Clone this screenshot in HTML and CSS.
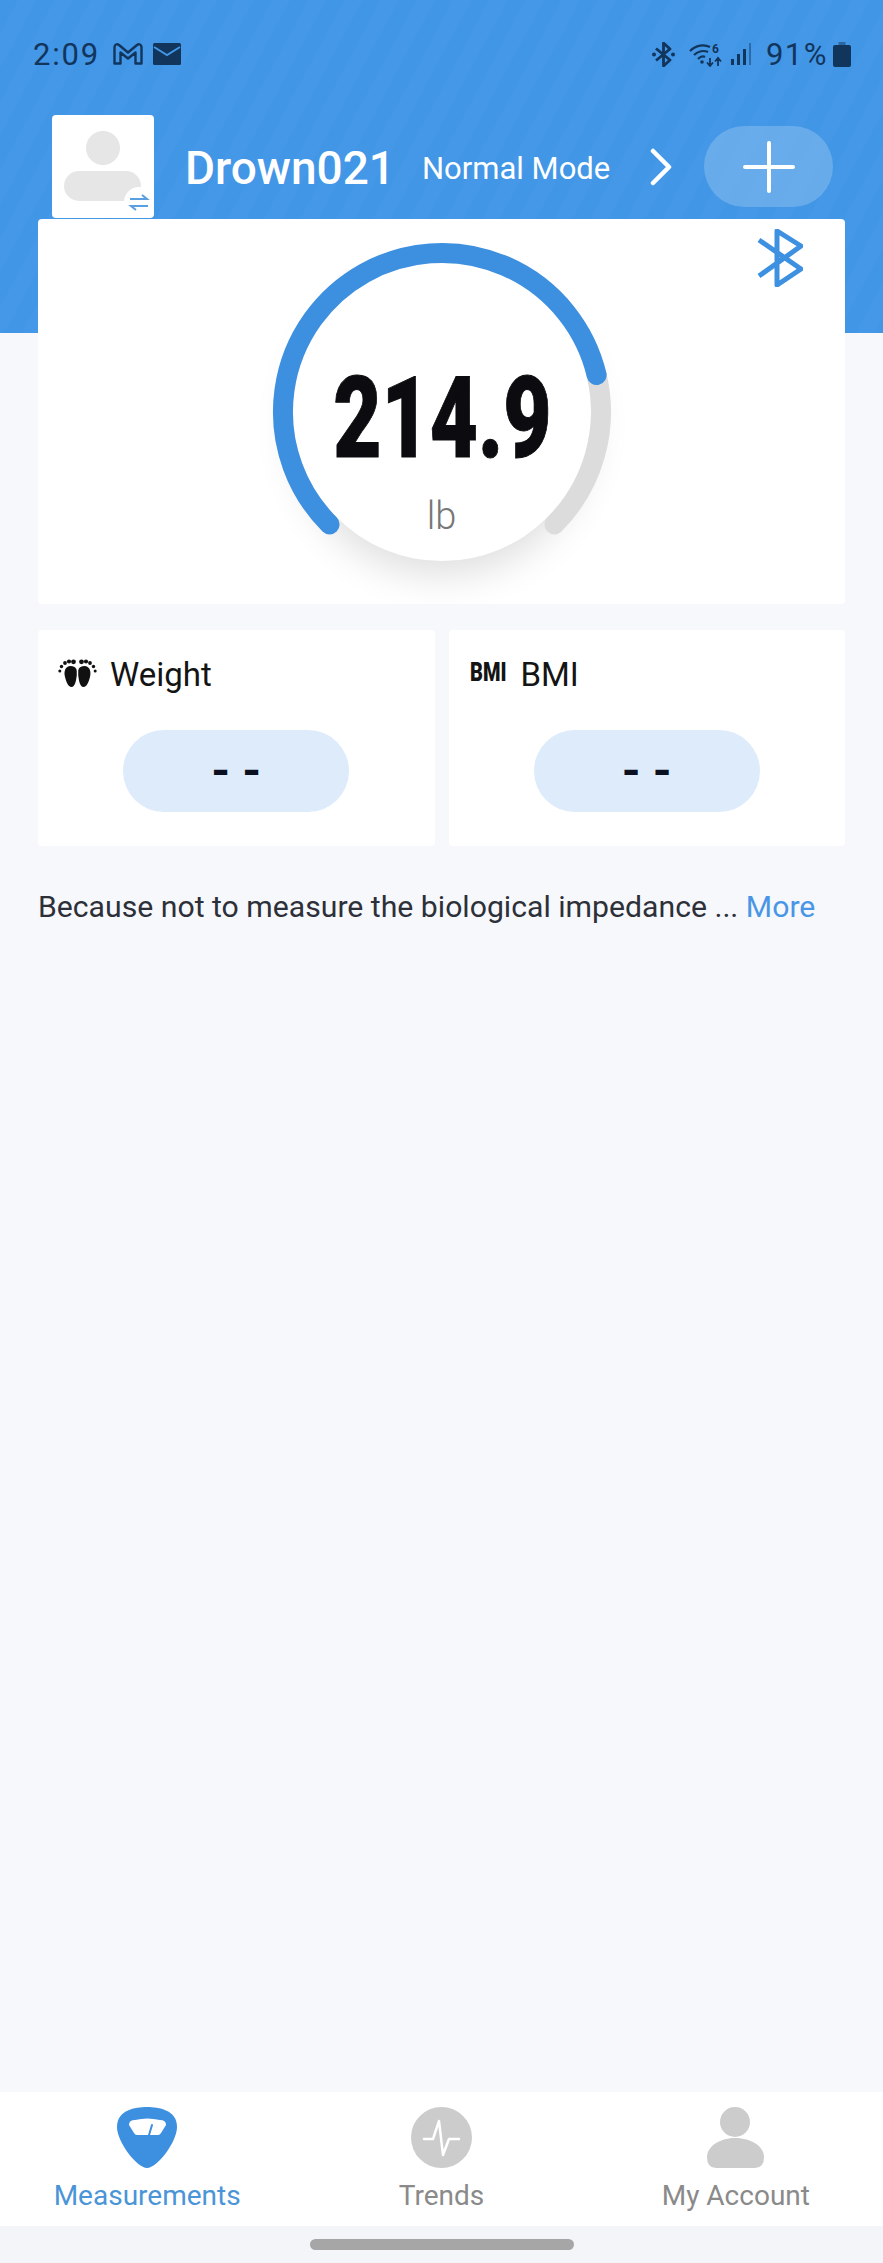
FILE: index.html
```html
<!DOCTYPE html>
<html lang="en">
<head>
  <meta charset="UTF-8">
  <title>Measurements</title>
  <link rel="stylesheet" href="styles.css">
</head>
<body>
  <header class="top">
    <div class="status">
      <div class="status-left">
        <span class="time">2:09</span>
        <svg class="ic-gmail" viewBox="0 0 30 22"><path d="M1.500 20.500V4C1.500 1.500 4 0.500 6 2L15 9.500L24 2C26 0.500 28.500 1.500 28.500 4V20.500H22.500V9.500L15 15.500L7.500 9.500V20.500Z" fill="none" stroke="#12355c" stroke-width="2.400" stroke-linejoin="round"/></svg>
        <svg class="ic-mail" viewBox="0 0 28 22"><rect width="28" height="22" rx="1.500" fill="#12355c"/><path d="M1 4L14 12L27 4" fill="none" stroke="#4296e6" stroke-width="2"/></svg>
      </div>
      <div class="status-right">
        <svg class="ic-bt" viewBox="0 0 23 25"><path d="M4 6.500L18 18L11.500 24V1L18 7L4 18.500" fill="none" stroke="#12355c" stroke-width="2.800" stroke-linejoin="round"/><circle cx="2" cy="12.500" r="2" fill="#12355c"/><circle cx="21" cy="12.500" r="2" fill="#12355c"/></svg>
        <svg class="ic-wifi" viewBox="0 0 33 25">
          <path d="M1 9C7 3 15 2 21 5M5 13C9 9 15 8 19 10M9 17C11 15 14 14 16 15" fill="none" stroke="#12355c" stroke-width="2.200"/>
          <circle cx="13" cy="20" r="1.800" fill="#12355c"/>
          <path d="M21 16V23M18 20.500L21 24L24 20.500M29 24V17M26 19.500L29 16L32 19.500" fill="none" stroke="#12355c" stroke-width="1.800"/>
          <text class="wifi-six" x="23" y="11">6</text>
        </svg>
        <svg class="ic-signal" viewBox="0 0 22 22"><path d="M1 16h3v6H1zM7 11h3v11H7zM13 6h3v16h-3z" fill="#12355c"/><path d="M19 0h2v22h-2z" fill="#12355c" opacity=".45"/></svg>
        <span class="batt-text">91%</span>
        <svg class="ic-batt" viewBox="0 0 18 25"><path d="M5.500 0h7v3h-7z" fill="#12355c" opacity=".5"/><rect y="3" width="18" height="22" rx="2" fill="#12355c"/></svg>
      </div>
    </div>

    <div class="profile">
      <svg class="avatar" viewBox="0 0 102 103">
        <rect width="102" height="103" rx="4" fill="#fff"/>
        <circle cx="51" cy="33" r="17" fill="#e6e6e6"/>
        <rect x="12" y="56" width="77" height="30" rx="15" fill="#e6e6e6"/>
        <circle cx="87" cy="87" r="15" fill="#fff"/>
        <path d="M78 84H95L90 80M96 91H79L84 95" fill="none" stroke="#5a9fe0" stroke-width="2"/>
      </svg>
      <span class="name">Drown021</span>
      <span class="mode">Normal Mode</span>
      <svg class="chevron" viewBox="0 0 22 38"><path d="M3 3L19 19L3 35" fill="none" stroke="#fff" stroke-width="4.500" stroke-linecap="round" stroke-linejoin="round"/></svg>
      <div class="add-btn">
        <svg class="plus" viewBox="0 0 52 52"><path d="M26 2V50M2 26H50" fill="none" stroke="#fff" stroke-width="4" stroke-linecap="round"/></svg>
      </div>
    </div>
  </header>

  <main class="content">
    <section class="scale-card">
      <svg class="ic-bt-big" viewBox="0 0 46 58"><path d="M2 11L44 40L20 56V2L44 17L2 47" fill="none" stroke="#3e91e0" stroke-width="5" stroke-linejoin="round"/></svg>
      <div class="gauge">
        <div class="dial">
          <span class="value">214.9</span>
          <span class="unit">lb</span>
        </div>
        <svg class="arc" viewBox="0 0 340 340">
          <path d="M324.600 132.900A159 159 0 0 1 282.400 282.400" fill="none" stroke="#dcdcdc" stroke-width="20" stroke-linecap="round"/>
          <path d="M57.600 282.400A159 159 0 1 1 324.600 132.900" fill="none" stroke="#3d8fdf" stroke-width="20" stroke-linecap="round"/>
        </svg>
      </div>
    </section>

    <div class="stats">
      <section class="stat">
        <div class="stat-title">
          <svg class="ic-feet" viewBox="0 0 39 28">
            <path d="M12.500 7C18 7 20 11 19 16.500C18 22 17 28 13.500 28C10 28 8 22 7 18C5.500 12 7.500 7 12.500 7Z" fill="#111"/>
            <path d="M26.500 7C21 7 19 11 20 16.500C21 22 22 28 25.500 28C29 28 31 22 32 18C33.500 12 31.500 7 26.500 7Z" fill="#111"/>
            <path d="M19.500 10V28" stroke="#fff" stroke-width="1.500"/>
            <g fill="#111">
              <circle cx="1.800" cy="12" r="1.500"/><circle cx="3.500" cy="7.500" r="1.700"/><circle cx="7" cy="4" r="1.900"/><circle cx="11" cy="2.500" r="2.100"/><circle cx="15.500" cy="2.800" r="2.400"/>
              <circle cx="37.200" cy="12" r="1.500"/><circle cx="35.500" cy="7.500" r="1.700"/><circle cx="32" cy="4" r="1.900"/><circle cx="28" cy="2.500" r="2.100"/><circle cx="23.500" cy="2.800" r="2.400"/>
            </g>
          </svg>
          <span>Weight</span>
        </div>
        <div class="pill">- -</div>
      </section>
      <section class="stat">
        <div class="stat-title">
          <span class="bmi-badge"><b>BMI</b></span>
          <span>BMI</span>
        </div>
        <div class="pill">- -</div>
      </section>
    </div>

    <p class="note">Because not to measure the biological impedance ... <a class="more" href="#">More</a></p>
  </main>

  <nav class="tabs">
    <a class="tab active" href="#">
      <svg class="tab-icon" viewBox="0 0 60 61">
        <path d="M30 0C42 0 60 3 60 20C60 35 40 61 30 61C20 61 0 35 0 20C0 3 18 0 30 0Z" fill="#3d8fdf"/>
        <path d="M12 18Q12 13 18 13Q30 10 43 13Q49 13 49 18L44 26Q43 28 41 28H20Q18 28 17 26Z" fill="#fff"/>
        <path d="M32 28L35 18" stroke="#3d8fdf" stroke-width="2" stroke-linecap="round"/>
      </svg>
      <span>Measurements</span>
    </a>
    <a class="tab" href="#">
      <svg class="tab-icon" viewBox="0 0 61 61">
        <circle cx="30.500" cy="30.500" r="30.500" fill="#cccccc"/>
        <path d="M13 32H22L28 14L32 48L38 32H48" fill="none" stroke="#fff" stroke-width="2.500" stroke-linecap="round" stroke-linejoin="round"/>
      </svg>
      <span>Trends</span>
    </a>
    <a class="tab" href="#">
      <svg class="tab-icon" viewBox="0 0 57 61">
        <circle cx="28" cy="15" r="15" fill="#cccccc"/>
        <path d="M0 50C0 40 12 31 28 31C45 31 57 40 57 50Q57 61 48 61H9Q0 61 0 50Z" fill="#cccccc"/>
      </svg>
      <span>My Account</span>
    </a>
  </nav>
  <div class="home-bar"><div class="home-pill"></div></div>
</body>
</html>
```
FILE: styles.css
```css
body {
  margin: 0;
  height: 2263px;
  display: flex;
  flex-direction: column;
  background: #f6f8fc;
  font-family: Roboto, "Liberation Sans", sans-serif;
  overflow: hidden;
}
a {
  text-decoration: none;
}

/* blue header */
.top {
  height: 333px;
  flex: none;
  padding-top: 41px;
  box-sizing: border-box;
  background: repeating-linear-gradient(118deg, #4296e6 0, #4296e6 16px, #4498e7 16px, #4498e7 32px);
}
.status {
  display: flex;
  justify-content: space-between;
  align-items: center;
  height: 26px;
  padding: 0 32px 0 33px;
  color: #12355c;
}
.status-left, .status-right {
  display: flex;
  align-items: center;
}
.time {
  font-size: 31px;
  letter-spacing: 1.800px;
  width: 67px;
  margin-right: 13px;
}
.ic-gmail { width: 30px; height: 22px; margin-right: 10px; }
.ic-mail { width: 28px; height: 22px; }
.ic-bt { width: 23px; height: 25px; margin-right: 14px; }
.ic-wifi { width: 33px; height: 25px; margin-right: 8px; }
.wifi-six {
  font-size: 12px;
  font-weight: 700;
  fill: #12355c;
}
.ic-signal { width: 22px; height: 22px; margin-right: 14px; }
.batt-text {
  font-size: 31px;
  letter-spacing: 1.500px;
  margin-right: 5px;
}
.ic-batt { width: 18px; height: 25px; }

.profile {
  display: flex;
  align-items: center;
  margin-top: 48px;
  padding-left: 52px;
  color: #fff;
}
.avatar { width: 102px; height: 103px; margin-right: 31px; }
.name {
  font-size: 46px;
  font-weight: 500;
  margin: 3px 27px 0 0;
}
.mode {
  font-size: 31px;
  margin: 3px 40px 0 0;
}
.chevron { width: 22px; height: 38px; margin-right: 32px; }
.add-btn {
  width: 129px;
  height: 81px;
  border-radius: 41px;
  background: rgba(255, 255, 255, 0.2);
  display: flex;
  align-items: center;
  justify-content: center;
}
.plus { width: 52px; height: 52px; }

/* cards */
.content {
  flex: 1;
  margin-top: -114px;
  padding: 0 38px;
}
.scale-card {
  position: relative;
  height: 385px;
  background: #fff;
  border-radius: 4px;
  overflow: hidden;
}
.ic-bt-big {
  position: absolute;
  top: 10px;
  right: 42px;
  width: 46px;
  height: 58px;
}
.gauge {
  position: relative;
  width: 340px;
  height: 340px;
  margin: 23px auto 0;
}
.dial {
  width: 298px;
  height: 298px;
  margin: 21px;
  position: absolute;
  border-radius: 50%;
  background: #fff;
  box-shadow: 0 14px 38px rgba(0, 0, 0, 0.13);
  display: flex;
  flex-direction: column;
  align-items: center;
}
.arc {
  position: absolute;
  width: 340px;
  height: 340px;
}
.value {
  display: block;
  margin: 95px 0 0 2px;
  font-size: 114px;
  line-height: 120px;
  font-weight: 900;
  color: #0c0c10;
  -webkit-text-stroke: 1px #0c0c10;
  transform: scaleX(0.73);
  white-space: nowrap;
}
.unit {
  margin-top: 17px;
  font-size: 38px;
  line-height: 42px;
  font-weight: 300;
  color: #777777;
}

.stats {
  display: grid;
  grid-template-columns: 1fr 1fr;
  gap: 14px;
  margin-top: 26px;
}
.stat {
  height: 216px;
  background: #fff;
  border-radius: 4px;
  display: flex;
  flex-direction: column;
}
.stat-title {
  display: flex;
  align-items: center;
  height: 30px;
  margin: 29px 0 41px 20px;
  font-size: 33px;
  color: #141414;
}
.ic-feet { width: 39px; height: 28px; margin: -2px 13px 0 0; }
.bmi-badge {
  width: 37px;
  margin: -3px 14px 0 1px;
  font-size: 25px;
  line-height: 30px;
}
.bmi-badge b {
  display: inline-block;
  font-weight: 900;
  transform: scaleX(0.8);
  transform-origin: left center;
}
.pill {
  width: 226px;
  height: 82px;
  margin: 0 auto;
  padding-bottom: 2px;
  box-sizing: border-box;
  border-radius: 41px;
  background: #deebfb;
  display: flex;
  align-items: center;
  justify-content: center;
  font-size: 48px;
  font-weight: 700;
  color: #0b1020;
}
.note {
  margin: 41px 0 0;
  font-size: 30.200px;
  line-height: 40px;
  color: #2d3038;
}
.more {
  color: #4a96e6;
}

/* bottom tabs */
.tabs {
  display: grid;
  grid-template-columns: 1fr 1fr 1fr;
  height: 134px;
  flex: none;
  background: #fff;
}
.tab {
  display: flex;
  flex-direction: column;
  align-items: center;
  padding-top: 15px;
  font-size: 28px;
  line-height: 32px;
  color: #8a8a8a;
}
.tab.active {
  color: #4a94d8;
}
.tab-icon {
  height: 61px;
  margin-bottom: 12px;
}
.home-bar {
  height: 37px;
  flex: none;
  padding-top: 13px;
  box-sizing: border-box;
  background: #f3f5f9;
}
.home-pill {
  width: 264px;
  height: 11px;
  margin: 0 auto;
  border-radius: 6px;
  background: #a6a6a6;
}
```
